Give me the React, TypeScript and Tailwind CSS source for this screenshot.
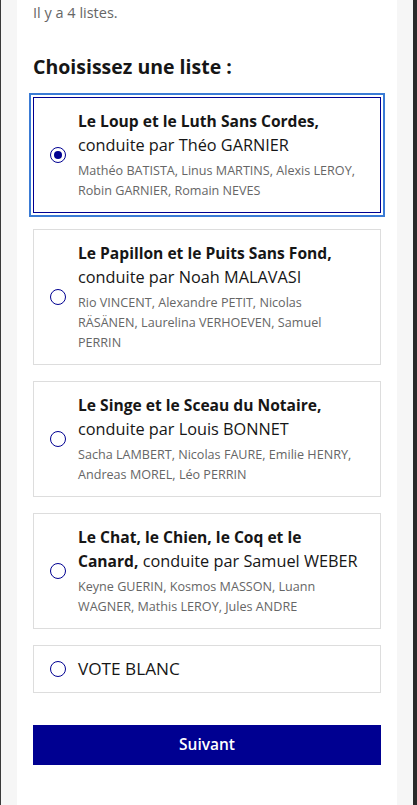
import React, { useState } from 'react';

interface Liste {
  id: string;
  name: string;
  leader: string;
  members: string;
}

const listes: Liste[] = [
  {
    id: 'loup',
    name: 'Le Loup et le Luth Sans Cordes',
    leader: 'Théo GARNIER',
    members: 'Mathéo BATISTA, Linus MARTINS, Alexis LEROY, Robin GARNIER, Romain NEVES',
  },
  {
    id: 'papillon',
    name: 'Le Papillon et le Puits Sans Fond',
    leader: 'Noah MALAVASI',
    members: 'Rio VINCENT, Alexandre PETIT, Nicolas RÄSÄNEN, Laurelina VERHOEVEN, Samuel PERRIN',
  },
  {
    id: 'singe',
    name: 'Le Singe et le Sceau du Notaire',
    leader: 'Louis BONNET',
    members: 'Sacha LAMBERT, Nicolas FAURE, Emilie HENRY, Andreas MOREL, Léo PERRIN',
  },
  {
    id: 'chat',
    name: 'Le Chat, le Chien, le Coq et le Canard',
    leader: 'Samuel WEBER',
    members: 'Keyne GUERIN, Kosmos MASSON, Luann WAGNER, Mathis LEROY, Jules ANDRE',
  },
];

const Radio = ({ checked }: { checked: boolean }) => (
  <span className="shrink-0 w-4 h-4 rounded-full border-[1.5px] border-[#000091] flex items-center justify-center">
    {checked && <span className="w-2 h-2 rounded-full bg-[#000091]" />}
  </span>
);

const App = () => {
  const [selected, setSelected] = useState<string>('loup');

  return (
    <div
      className="min-h-screen flex bg-[#f6f6f6] border-l border-l-[#3a3a3a] border-r-4 border-r-[#2a2a2a]"
      style={{ fontFamily: '"Open Sans", "Noto Sans", sans-serif' }}
    >
      <div className="ml-4 w-[380px] min-h-screen bg-white px-4 pt-px pb-10">
        <p className="text-[14.5px] leading-6 text-[#666666]">Il y a 4 listes.</p>

        <h2 className="mt-7 mb-4 text-[19.5px] leading-7 font-bold text-[#161616]">
          Choisissez une liste :
        </h2>

        <div className="flex flex-col gap-4">
          {listes.map((l) => {
            const isSel = selected === l.id;
            return (
              <button
                key={l.id}
                onClick={() => setSelected(l.id)}
                className={`flex items-center gap-3 px-4 py-[11px] text-left border ${
                  isSel
                    ? 'border-[#000091] outline-2 outline-offset-2 outline-[#3a7bd5]'
                    : 'border-[#dddddd]'
                }`}
              >
                <Radio checked={isSel} />
                <span className="flex flex-col">
                  <span className="text-[16.3px] leading-6 text-[#161616]">
                    <span className="font-bold text-[15.6px]">{l.name},</span> conduite par {l.leader}
                  </span>
                  <span className="mt-1 text-[12.6px] leading-5 text-[#666666]">{l.members}</span>
                </span>
              </button>
            );
          })}

          <button
            onClick={() => setSelected('blanc')}
            className={`flex items-center gap-3 px-4 py-[11px] text-left border ${
              selected === 'blanc'
                ? 'border-[#000091] outline-2 outline-offset-2 outline-[#3a7bd5]'
                : 'border-[#dddddd]'
            }`}
          >
            <Radio checked={selected === 'blanc'} />
            <span className="text-[17.2px] leading-6 text-[#161616]">VOTE BLANC</span>
          </button>
        </div>

        <button className="mt-8 w-full h-10 bg-[#000091] text-white text-[15.5px] font-semibold">
          Suivant
        </button>
      </div>
    </div>
  );
};

export default App;
